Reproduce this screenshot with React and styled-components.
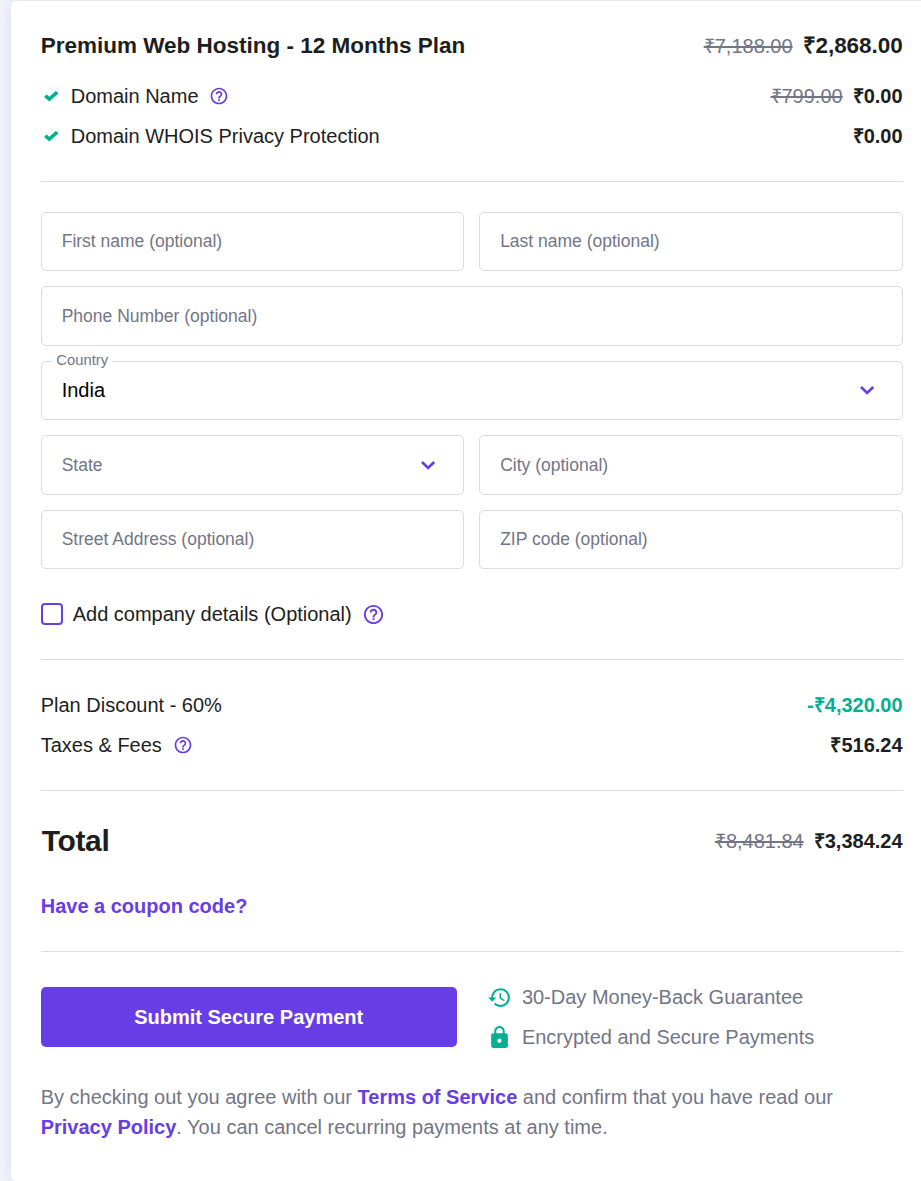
import React from 'react';
import styled, { createGlobalStyle } from 'styled-components';

const GlobalStyle = createGlobalStyle`
  *, *::before, *::after { box-sizing: border-box; }
  body {
    margin: 0;
    background: #f3f3fc;
    color: #1d1e20;
    font: 20px/30px "Liberation Sans", Arial, sans-serif;
  }
`;

const Page = styled.main`
  height: 1181px;
  padding: 1px 0 0 11px;
  overflow: hidden;
`;

const Card = styled.section`
  height: 1180px;
  margin-right: -20px;
  padding: 30px 38.4px 0 29.7px;
  background: #fff;
  border-radius: 5px;
  box-shadow: 0 0 15px rgba(29, 30, 80, 0.1);
`;

const Row = styled.div`
  display: flex;
  align-items: center;
  justify-content: space-between;
  height: 30px;
  margin-top: ${(p) => p.$top || 0}px;
`;

const Side = styled.div`
  display: flex;
  align-items: ${(p) => (p.$baseline ? 'baseline' : 'center')};
  gap: ${(p) => p.$gap ?? 10}px;
`;

const Title = styled.h2`
  margin: 0;
  font-size: 22.5px;
  font-weight: 700;
  line-height: 30px;
`;

const TotalTitle = styled.h1`
  margin: 0 0 0 1px;
  font-size: 30px;
  font-weight: 700;
  letter-spacing: -0.35px;
`;

const Text = styled.span`
  white-space: nowrap;
  letter-spacing: ${(p) => p.$ls || 0}px;
`;

const OldPrice = styled.s`
  color: #727586;
  font-size: 20px;
  text-decoration-thickness: 2px;
`;

const Price = styled.strong`
  font-size: ${(p) => (p.$large ? 22.5 : 20)}px;
  letter-spacing: ${(p) => (p.$large ? -0.06 : 0)}px;
  color: ${(p) => (p.$green ? '#00b090' : 'inherit')};
`;

const Divider = styled.hr`
  height: 1px;
  margin: ${(p) => p.$top}px 0 ${(p) => p.$bottom}px;
  border: 0;
  background: #dadce0;
`;

const Form = styled.form`
  display: grid;
  grid-template-columns: 1fr 1fr;
  grid-auto-rows: 59.5px;
  gap: 15px;
`;

const Field = styled.div`
  position: relative;
  display: flex;
  align-items: center;
  justify-content: space-between;
  grid-column: ${(p) => (p.$wide ? '1 / -1' : 'auto')};
  padding: 0 20px 0.7px;
  border: 1px solid #dadce0;
  border-radius: 5px;
  color: ${(p) => (p.$filled ? '#000' : '#727586')};
  font-size: ${(p) => (p.$filled ? 20 : 17.5)}px;
  line-height: 28px;
`;

const FloatingLabel = styled.label`
  position: absolute;
  top: -11px;
  left: 10.6px;
  padding: 0 4px;
  background: #fff;
  color: #727586;
  font-size: 14.8px;
  line-height: 18px;
`;

const Checkbox = styled.span`
  width: 22px;
  height: 22px;
  border: 2px solid #673de6;
  border-radius: 4px;
`;

const Link = styled.a`
  color: #673de6;
  font-weight: 700;
`;

const Checkout = styled.div`
  display: flex;
  gap: 30.4px;
`;

const SubmitButton = styled.button`
  width: 416px;
  height: 60px;
  padding: 0;
  border: 0;
  border-radius: 5px;
  background: #673de6;
  color: #fff;
  font: 700 20px/30px "Liberation Sans", Arial, sans-serif;
`;

const Guarantees = styled.div`
  display: grid;
  gap: 10px;
  margin-top: -5px;
  height: 70px;
  color: #727586;
`;

const Terms = styled.p`
  margin: 30px 0 0;
  color: #727586;
  white-space: nowrap;
`;

const Icon = styled.svg`
  display: block;
  flex: none;
  width: ${(p) => p.$size}px;
  height: ${(p) => p.$size}px;
  fill: ${(p) => p.$color || '#673de6'};
`;

const Help = ({ size = 20 }) => (
  <Icon $size={size} viewBox="0 0 24 24">
    <path d="M11 18h2v-2h-2v2zm1-16C6.48 2 2 6.48 2 12s4.48 10 10 10 10-4.48 10-10S17.52 2 12 2zm0 18c-4.41 0-8-3.59-8-8s3.59-8 8-8 8 3.59 8 8-3.59 8-8 8zm0-14c-2.21 0-4 1.79-4 4h2c0-1.1.9-2 2-2s2 .9 2 2c0 2-3 1.75-3 5h2c0-2.25 3-2.5 3-5 0-2.21-1.79-4-4-4z" />
  </Icon>
);

const Check = () => (
  <Icon $size={20} viewBox="0 0 20 20">
    <path d="M4.3 9.6 8.3 13.1 16.2 6.1" fill="none" stroke="#00b090" strokeWidth="3.5" />
  </Icon>
);

const Chevron = () => (
  <Icon $size={30} viewBox="0 0 30 30">
    <path d="m9 12 6.1 5.9 6.1-5.9" fill="none" stroke="#673de6" strokeWidth="2.7" />
  </Icon>
);

const History = () => (
  <Icon $size={25} $color="#00b090" viewBox="0 0 24 24">
    <path d="M13 3c-4.97 0-9 4.03-9 9H1l3.89 3.89.07.14L9 12H6c0-3.87 3.13-7 7-7s7 3.13 7 7-3.13 7-7 7c-1.93 0-3.68-.79-4.94-2.06l-1.42 1.42C8.27 19.99 10.51 21 13 21c4.97 0 9-4.03 9-9s-4.03-9-9-9zm-1 5v5l4.28 2.54.72-1.21-3.5-2.08V8H12z" />
  </Icon>
);

const Lock = () => (
  <Icon $size={25} $color="#00b090" viewBox="0 0 24 24">
    <path d="M18 8h-1V6c0-2.76-2.24-5-5-5S7 3.24 7 6v2H6c-1.1 0-2 .9-2 2v10c0 1.1.9 2 2 2h12c1.1 0 2-.9 2-2V10c0-1.1-.9-2-2-2zm-6 9c-1.1 0-2-.9-2-2s.9-2 2-2 2 .9 2 2-.9 2-2 2zm3.1-9H8.9V6c0-1.71 1.39-3.1 3.1-3.1 1.71 0 3.1 1.39 3.1 3.1v2z" />
  </Icon>
);

export default function App() {
  return (
    <Page>
      <GlobalStyle />
      <Card>
        <Row>
          <Title>Premium Web Hosting - 12 Months Plan</Title>
          <Side $baseline>
            <OldPrice>₹7,188.00</OldPrice>
            <Price $large>₹2,868.00</Price>
          </Side>
        </Row>
        <Row $top={20}>
          <Side>
            <Check />
            <Text>Domain Name</Text>
            <Help />
          </Side>
          <Side>
            <OldPrice>₹799.00</OldPrice>
            <Price>₹0.00</Price>
          </Side>
        </Row>
        <Row $top={10}>
          <Side>
            <Check />
            <Text>Domain WHOIS Privacy Protection</Text>
          </Side>
          <Price>₹0.00</Price>
        </Row>
        <Divider $top={30} $bottom={29.75} />
        <Form>
          <Field>First name (optional)</Field>
          <Field>Last name (optional)</Field>
          <Field $wide>Phone Number (optional)</Field>
          <Field $wide $filled>
            <FloatingLabel>Country</FloatingLabel>
            India
            <Chevron />
          </Field>
          <Field>
            State
            <Chevron />
          </Field>
          <Field>City (optional)</Field>
          <Field>Street Address (optional)</Field>
          <Field>ZIP code (optional)</Field>
        </Form>
        <Row $top={29.75}>
          <Side>
            <Checkbox />
            <Text>Add company details (Optional)</Text>
            <Help size={23} />
          </Side>
        </Row>
        <Divider $top={30} $bottom={30} />
        <Row>
          <Text>Plan Discount - 60%</Text>
          <Price $green>-₹4,320.00</Price>
        </Row>
        <Row $top={10}>
          <Side $gap={11}>
            <Text>Taxes &amp; Fees</Text>
            <Help />
          </Side>
          <Price>₹516.24</Price>
        </Row>
        <Divider $top={30} $bottom={35} />
        <Row>
          <TotalTitle>Total</TotalTitle>
          <Side>
            <OldPrice>₹8,481.84</OldPrice>
            <Price>₹3,384.24</Price>
          </Side>
        </Row>
        <Row $top={35}>
          <Link>Have a coupon code?</Link>
        </Row>
        <Divider $top={30} $bottom={35} />
        <Checkout>
          <SubmitButton>Submit Secure Payment</SubmitButton>
          <Guarantees>
            <Side $gap={9.8}>
              <History />
              <Text>30-Day Money-Back Guarantee</Text>
            </Side>
            <Side $gap={9.8}>
              <Lock />
              <Text>Encrypted and Secure Payments</Text>
            </Side>
          </Guarantees>
        </Checkout>
        <Terms>
          By checking out you agree with our <Link>Terms of Service</Link> and confirm that you have read our
          <br />
          <Link>Privacy Policy</Link>. You can cancel recurring payments at any time.
        </Terms>
      </Card>
    </Page>
  );
}
